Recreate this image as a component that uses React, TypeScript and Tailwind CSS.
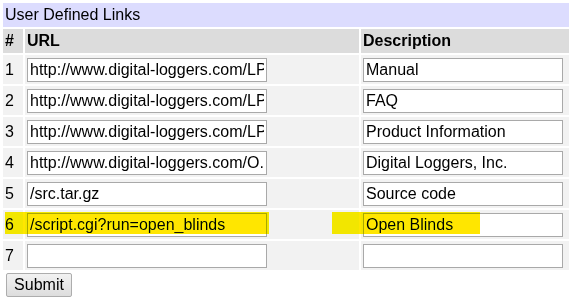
const links = [
  { url: 'http://www.digital-loggers.com/LP', desc: 'Manual' },
  { url: 'http://www.digital-loggers.com/LP', desc: 'FAQ' },
  { url: 'http://www.digital-loggers.com/LP', desc: 'Product Information' },
  { url: 'http://www.digital-loggers.com/O.', desc: 'Digital Loggers, Inc.' },
  { url: '/src.tar.gz', desc: 'Source code' },
  { url: '/script.cgi?run=open_blinds', desc: 'Open Blinds', marked: true },
  { url: '', desc: '' },
];

const inputCls =
  'h-[24px] border border-[#a9a9a9] bg-white px-[2px] text-[16px] text-black outline-none';

export default function App() {
  return (
    <div className="min-h-screen bg-white font-['Liberation_Sans',Arial,sans-serif] text-[16px] text-black">
      <table className="ml-[1px] mt-[1px] w-[570px] border-separate border-spacing-[2px]">
        <tbody>
          <tr>
            <td colSpan={3} className="h-[24px] bg-[#dcdcfe] px-[2px] leading-[24px]">
              User Defined Links
            </td>
          </tr>
          <tr className="bg-[#dcdcdc] font-bold">
            <th className="h-[23px] w-[20px] px-[2px] text-left">#</th>
            <th className="w-[334px] px-[2px] text-left">URL</th>
            <th className="px-[2px] text-left">Description</th>
          </tr>
          {links.map((l, i) => (
            <tr key={i} className="bg-[#f2f2f2]">
              <td className="relative h-[29px] px-[2px]">
                {l.marked && (
                  <span className="pointer-events-none absolute left-[2px] top-[2px] h-[22px] w-[264px] bg-[#ffe600] mix-blend-darken" />
                )}
                {i + 1}
              </td>
              <td className="px-[2px]">
                <input readOnly value={l.url} className={`${inputCls} w-[240px]`} />
              </td>
              <td className="relative px-[2px]">
                <input readOnly value={l.desc} className={`${inputCls} w-[200px]`} />
                {l.marked && (
                  <span className="pointer-events-none absolute left-[-29px] top-[2px] h-[22px] w-[148px] bg-[#ffe600] mix-blend-darken" />
                )}
              </td>
            </tr>
          ))}
        </tbody>
      </table>
      <div className="pl-[6px] pt-[1px]">
        <button className="h-[24px] w-[66px] rounded-[2px] border border-[#adadad] bg-gradient-to-b from-[#f2f2f2] to-[#dddddd] text-[16px] leading-[22px] text-black">
          Submit
        </button>
      </div>
    </div>
  );
}
